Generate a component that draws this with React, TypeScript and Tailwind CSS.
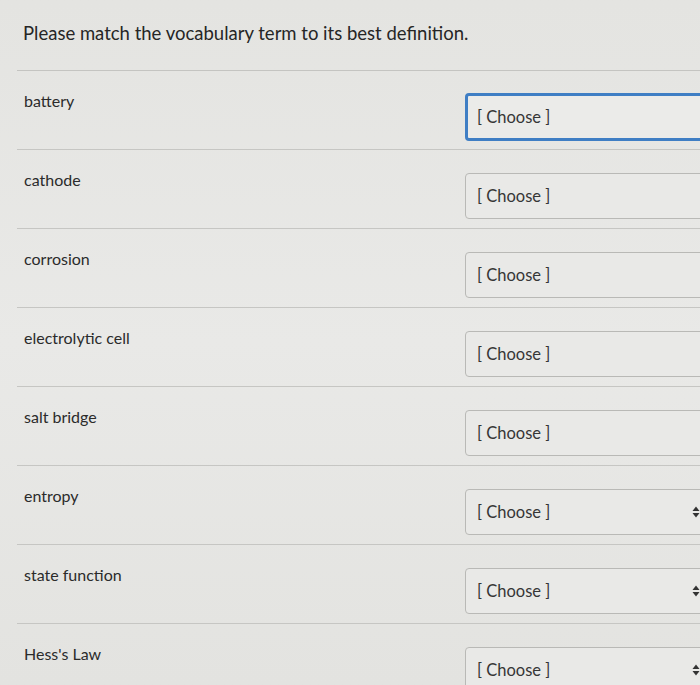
import React from "react";

const terms = [
  "battery",
  "cathode",
  "corrosion",
  "electrolytic cell",
  "salt bridge",
  "entropy",
  "state function",
  "Hess's Law",
];

function Arrows() {
  return (
    <svg width="8" height="12" viewBox="0 0 8 12" className="shrink-0">
      <path d="M4 0.5 L7.5 5 L0.5 5 Z" fill="#333" />
      <path d="M4 11.5 L7.5 7 L0.5 7 Z" fill="#333" />
    </svg>
  );
}

export default function App() {
  return (
    <div
      className="w-[700px] h-[685px] overflow-hidden bg-gradient-to-b from-[#e4e4e1] via-[#e9e9e7] to-[#e3e3e0] text-[#2e2e2e]"
      style={{ fontFamily: "Lato, 'Open Sans', sans-serif" }}
    >
      <div className="pl-[23px] pt-[20px] h-[70px] text-[18.5px] leading-[26px] text-[#262626]">
        Please match the vocabulary term to its best definition.
      </div>
      <div className="ml-[17px] border-t border-[#c4c4c1]">
        {terms.map((t, i) => (
          <div
            key={t}
            className="h-[79px] border-b border-[#c6c6c3] flex items-start"
          >
            <div className="w-[448px] shrink-0 pl-[7px] pt-[20px] text-[16px] leading-[20px] text-[#2b2b2b]">
              {t}
            </div>
            <div
              className={
                i === 0
                  ? "mt-[22px] w-[250px] h-[48px] rounded-[4px] border-[3px] border-[#3f7ec4] bg-[#ebebe9] flex items-center pl-[9px] text-[16.5px] text-[#363636] shrink-0"
                  : "mt-[23px] w-[250px] h-[46px] rounded-[4px] border border-[#b9b9b6] bg-[#e9e9e7] flex items-center pl-[11px] pr-[14px] justify-between text-[16.5px] text-[#363636] shrink-0"
              }
            >
              <span>[ Choose ]</span>
              {i >= 5 ? <Arrows /> : null}
            </div>
          </div>
        ))}
      </div>
    </div>
  );
}
